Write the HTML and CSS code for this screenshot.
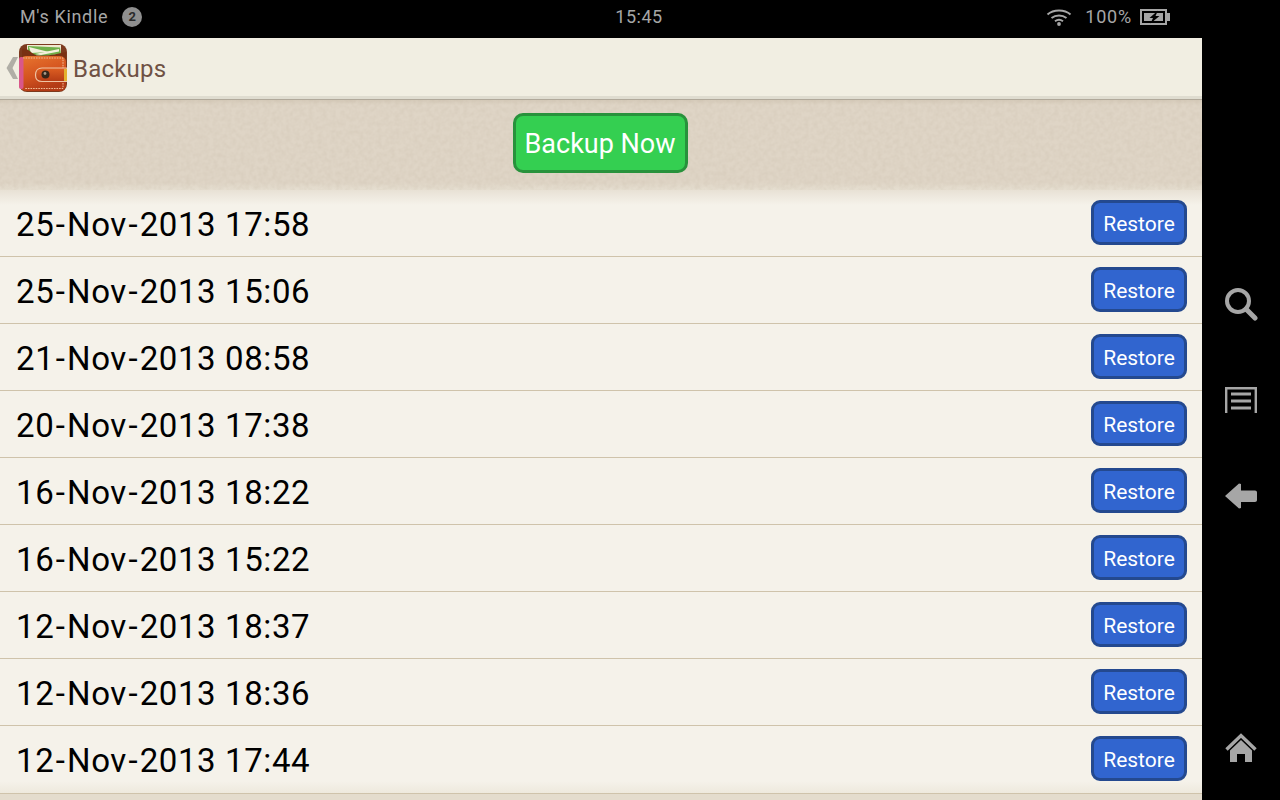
FILE: index.html
```html
<!DOCTYPE html>
<html lang="en">
<head>
<meta charset="utf-8">
<title>Backups</title>
<link rel="stylesheet" href="styles.css">
</head>
<body>
<div class="device">
  <header class="status">
    <div class="status-left"><span class="device-name">M's Kindle</span><span class="badge">2</span></div>
    <div class="clock">15:45</div>
    <div class="status-right">
      <svg class="wifi" width="26" height="18" viewBox="0 0 26 18" aria-hidden="true">
        <g fill="none" stroke="#a6a6a6" stroke-width="2">
          <path d="M1.5 6.5C7.5 1.2 18.5 1.2 24.5 6.5"/>
          <path d="M5.5 10C9.8 6.6 16.2 6.6 20.5 10"/>
          <path d="M9 13.2C11.4 11.4 14.6 11.4 17 13.2"/>
        </g>
        <circle cx="13" cy="16" r="1.9" fill="#a6a6a6"/>
      </svg>
      <span class="battery-text">100%</span>
      <svg class="battery" width="30" height="18" viewBox="0 0 30 18" aria-hidden="true">
        <path fill-rule="evenodd" fill="#a6a6a6" d="M0 1H27V17H0ZM2 3V15H25V3Z"/>
        <rect x="27" y="5" width="3" height="8" fill="#a6a6a6"/>
        <rect x="4" y="5" width="19" height="8" fill="#a6a6a6"/>
        <path fill="#000" d="M18 2.5L9.5 10H13L10.5 15.5L19.5 8H15.5Z"/>
      </svg>
    </div>
  </header>

  <div class="body">
    <main class="screen">
      <nav class="titlebar">
        <svg class="chevron" width="14" height="24" viewBox="0 0 14 24" aria-hidden="true">
          <path fill="#b0aea6" d="M8 1H13L7.5 12L13 23H8L1.5 12Z"/>
        </svg>
        <svg class="app-icon" width="48" height="48" viewBox="0 0 48 48" aria-hidden="true">
          <defs>
            <linearGradient id="leather" x1="0" y1="0" x2="0.4" y2="1">
              <stop offset="0" stop-color="#e8762f"/>
              <stop offset="0.6" stop-color="#d4531f"/>
              <stop offset="1" stop-color="#b23b16"/>
            </linearGradient>
            <linearGradient id="strap" x1="0" y1="0" x2="0" y2="1">
              <stop offset="0" stop-color="#de5f22"/>
              <stop offset="1" stop-color="#b53c15"/>
            </linearGradient>
          </defs>
          <rect x="0" y="0" width="48" height="48" rx="8" fill="#7d3a1e"/>
          <path fill="#f0e8cf" d="M8 1H42V12H8Z"/>
          <path fill="#6fb04a" d="M9 2L41 3.5L42 10L24 12L9 10Z"/>
          <path fill="#f4f0dc" d="M10 3L30 8L12 9Z"/>
          <path fill="#f4f0dc" d="M16 10L40 5L40 7.5L22 11Z"/>
          <path fill="#7a3113" d="M3 5C10 3 12 11 20 11.500C30 12 38 10 47 8V15H3Z"/>
          <rect x="1" y="12" width="46" height="35" rx="6" fill="url(#leather)"/>
          <path fill="none" stroke="#f3c09a" stroke-width="1" stroke-dasharray="1.6 1" d="M4 14H44V44.500H6"/>
          <rect x="0" y="13" width="4.500" height="32" rx="2" fill="#d9578a"/>
          <path fill="url(#strap)" stroke="#efc4a4" stroke-width="1.200" d="M48 24H23C19 24 16.500 27 16.500 31C16.500 35 19 37.500 23 37.500H48Z"/>
          <rect x="45" y="25" width="3" height="12" fill="#e3b12f"/>
          <circle cx="26.500" cy="30.500" r="4" fill="#33261b"/>
          <circle cx="26" cy="29.500" r="1.400" fill="#a89a88"/>
        </svg>
        <span class="title">Backups</span>
      </nav>

      <section class="toolbar">
        <svg class="grain" aria-hidden="true">
          <filter id="paper"><feTurbulence type="fractalNoise" baseFrequency="0.22" numOctaves="2" seed="4"/><feColorMatrix values="0 0 0 0 0.5  0 0 0 0 0.42  0 0 0 0 0.32  0.32 0 0 0 -0.1"/></filter>
          <rect width="100%" height="100%" filter="url(#paper)"/>
        </svg>
        <button class="backup-btn">Backup Now</button>
      </section>

      <ul class="list">
        <li class="row"><span class="date">25<span class="dash">-</span>Nov<span class="dash">-</span>2013 17:58</span><button class="restore">Restore</button></li>
        <li class="row"><span class="date">25<span class="dash">-</span>Nov<span class="dash">-</span>2013 15:06</span><button class="restore">Restore</button></li>
        <li class="row"><span class="date">21<span class="dash">-</span>Nov<span class="dash">-</span>2013 08:58</span><button class="restore">Restore</button></li>
        <li class="row"><span class="date">20<span class="dash">-</span>Nov<span class="dash">-</span>2013 17:38</span><button class="restore">Restore</button></li>
        <li class="row"><span class="date">16<span class="dash">-</span>Nov<span class="dash">-</span>2013 18:22</span><button class="restore">Restore</button></li>
        <li class="row"><span class="date">16<span class="dash">-</span>Nov<span class="dash">-</span>2013 15:22</span><button class="restore">Restore</button></li>
        <li class="row"><span class="date">12<span class="dash">-</span>Nov<span class="dash">-</span>2013 18:37</span><button class="restore">Restore</button></li>
        <li class="row"><span class="date">12<span class="dash">-</span>Nov<span class="dash">-</span>2013 18:36</span><button class="restore">Restore</button></li>
        <li class="row"><span class="date">12<span class="dash">-</span>Nov<span class="dash">-</span>2013 17:44</span><button class="restore">Restore</button></li>
      </ul>
      <div class="bottom-strip"></div>
    </main>

    <aside class="softkeys">
      <svg class="key-search" width="34" height="34" viewBox="0 0 34 34" aria-hidden="true">
        <circle cx="14" cy="14" r="11" fill="none" stroke="#a6a6a6" stroke-width="4"/>
        <path d="M22 22L31 31" stroke="#a6a6a6" stroke-width="5" stroke-linecap="round"/>
      </svg>
      <svg class="key-menu" width="32" height="26" viewBox="0 0 32 26" aria-hidden="true">
        <path fill="none" stroke="#a6a6a6" stroke-width="2.4" d="M1.200 26V1.200H30.800V26"/>
        <path fill="none" stroke="#a6a6a6" stroke-width="3" d="M6 7H26M6 14H26M6 21H26"/>
      </svg>
      <svg class="key-back" width="32" height="26" viewBox="0 0 32 26" aria-hidden="true">
        <path fill="#a6a6a6" d="M14 0.500L16 1V7.500H30C31.200 7.500 32 8.300 32 9.500V17C32 18.200 31.200 19 30 19H16V25L14 25.500L0 13Z"/>
      </svg>
      <svg class="key-home" width="32" height="30" viewBox="0 0 32 30" aria-hidden="true">
        <path fill="none" stroke="#a6a6a6" stroke-width="3.400" d="M1.500 16.500L16 2.500L30.500 16.500"/>
        <path fill="#a6a6a6" fill-rule="evenodd" d="M5 17.500L16 7L27 17.500V29H20V21H12V29H5Z"/>
      </svg>
    </aside>
  </div>
</div>
</body>
</html>
```

FILE: styles.css
```css
* { box-sizing: border-box; }
html, body { margin: 0; padding: 0; }
body { background: #000; font-family: Roboto, "Liberation Sans", sans-serif; }
.device { display: flex; flex-direction: column; width: 1280px; height: 800px; overflow: hidden; background: #000; }
.body { flex: 1; display: flex; min-height: 0; }
.screen { width: 1202px; display: flex; flex-direction: column; background: #f5f2ea; }

.status { height: 38px; flex: none; background: #000; display: grid; grid-template-columns: 1fr auto 1fr; align-items: center; padding: 0 22px 5px 20px; color: #a6a6a6; font-size: 18px; }
.status-left { display: flex; align-items: center; gap: 14px; }
.device-name { letter-spacing: 0.65px; }
.badge { width: 20px; height: 20px; border-radius: 50%; background: #8f8f8f; color: #2a2a2a; font-size: 13px; font-weight: 700; display: flex; align-items: center; justify-content: center; }
.clock { letter-spacing: 0.5px; }
.status-right { display: flex; align-items: center; justify-content: flex-end; gap: 8px; padding-right: 88px; }
.wifi { margin-right: 5px; }
.battery-text { letter-spacing: 0.8px; }

.titlebar { height: 61px; flex: none; display: flex; align-items: center; padding: 1px 0 0 5px; background: #f1eee2; border-bottom: 3px solid #dfdcd0; box-shadow: 0 1px 0 #b0a89a; position: relative; z-index: 1; }
.chevron { flex: none; }
.app-icon { flex: none; }
.title { margin: 2px 0 0 6px; font-size: 24px; color: #6f5144; letter-spacing: 0.2px; }

.toolbar { height: 91px; flex: none; position: relative; display: flex; justify-content: center; padding: 14px 2px 0 0; background: linear-gradient(#d3c8b7 0, #dfd5c6 6px, #dfd5c6 84px, #e6dfd1 91px); }
.grain { position: absolute; left: 0; top: 0; width: 100%; height: 100%; }
.backup-btn { position: relative; width: 175px; height: 60px; border: 3px solid #28923c; border-radius: 10px; background: #34cf51; color: #fff; font: 400 27px Roboto, sans-serif; padding: 2px 0 0; }

.list { margin: 0; padding: 0; list-style: none; }
.row { height: 67px; display: flex; align-items: center; justify-content: space-between; padding: 0 15px 0 16px; border-bottom: 1px solid #cfc3ab; background: #f5f2ea; }
.row:first-child { background: linear-gradient(#e8e1d5 0, #f5f2ea 15px); }
.row:last-child { border-bottom: 0; background: linear-gradient(#f5f2ea 55px, #eee9dd 67px); }
.date { font-size: 33px; color: #000; letter-spacing: 0.6px; margin-top: 2px; }
.dash { margin: 0 1.5px; }
.restore { width: 96px; height: 45px; margin-bottom: 2px; border: 3px solid #24498f; border-radius: 9px; background: #3165cf; color: #fff; font: 400 21px Roboto, sans-serif; padding: 3px 0 0; }

.bottom-strip { flex: 1; border-top: 1px solid #cfc3ab; background: #e4dccd; }

.softkeys { width: 78px; flex: none; background: #000; display: flex; flex-direction: column; align-items: center; padding-top: 249px; }
.key-search { margin-left: -1px; }
.key-menu { margin-top: 66px; }
.key-back { margin-top: 70px; }
.key-home { margin-top: 224px; }
```
